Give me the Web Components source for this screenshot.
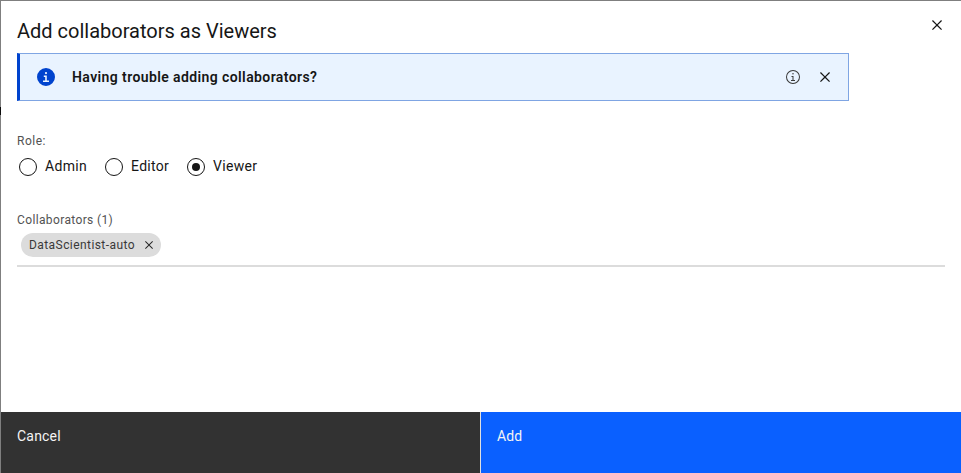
<!DOCTYPE html>
<html lang="en"><head><meta charset="utf-8"><title>Add collaborators</title>
<style>
body{margin:0;background:#fff;overflow:hidden;font-family:Roboto,"Liberation Sans",sans-serif;color:#161616}
</style></head><body>
<collab-modal></collab-modal>
<script>
const define=(name,html)=>customElements.define(name,class extends HTMLElement{
  constructor(){super();this.attachShadow({mode:'open'}).innerHTML=html;}
});

define('close-icon',`<style>:host{display:block;width:20px;height:20px}svg{display:block;width:100%;height:100%}</style>
<svg viewBox="0 0 32 32" fill="currentColor"><path d="M24 9.4 22.6 8 16 14.6 9.4 8 8 9.4 14.6 16 8 22.6 9.4 24 16 17.4 22.6 24 24 22.6 17.4 16z"/></svg>`);

define('info-icon',`<style>:host{display:block;width:16px;height:16px}svg{display:block;width:100%;height:100%}.solid,:host([filled]) .line{display:none}:host([filled]) .solid{display:block}</style>
<svg class="line" viewBox="0 0 32 32" fill="currentColor"><path d="M17 22v-8h-4v2h2v6h-3v2h8v-2zM16 8a1.5 1.5 0 1 0 0 3 1.5 1.5 0 0 0 0-3z"/><path d="M16 30a14 14 0 1 1 14-14 14 14 0 0 1-14 14zm0-26a12 12 0 1 0 12 12A12 12 0 0 0 16 4z"/></svg>
<svg class="solid" viewBox="0 0 20 20" fill="currentColor"><path d="M10 1a9 9 0 1 0 9 9 9 9 0 0 0-9-9zm0 4a1.1 1.1 0 1 1-1.1 1.1A1.1 1.1 0 0 1 10 5zm3 9.9H7v-1.3h2.2V9.9H7.8V8.5h3v5.1H13z"/></svg>`);

define('inline-notice',`<style>
:host{display:flex;align-items:center;box-sizing:border-box;width:832px;height:48px;background:#e9f3ff;border:1px solid #7fa5e3;border-left:3px solid #0043ce;padding:0 13px 0 16px}
info-icon[filled]{width:20px;height:20px;color:#0043ce;margin:0 16px 0 0}
.msg{flex:1;font-size:14px;line-height:18px;font-weight:600;letter-spacing:.4px;white-space:nowrap}
.more{margin-right:14px;color:#393939}
</style><info-icon filled></info-icon><span class="msg"><slot></slot></span><info-icon class="more"></info-icon><close-icon></close-icon>`);

define('radio-option',`<style>
:host{display:flex;align-items:center;font-size:14px;line-height:18px}
i{display:grid;place-items:center;box-sizing:border-box;width:18px;height:18px;border:1px solid #161616;border-radius:50%;margin:0 8px 0 0}
span{padding-bottom:2px}
:host([checked]) i::after{content:"";width:8px;height:8px;border-radius:50%;background:#161616}
</style><i></i><span><slot></slot></span>`);

define('user-tag',`<style>
:host{display:flex;align-items:center;box-sizing:border-box;width:140px;height:24px;border-radius:12px;background:#dcdcdc;color:#393939;padding:0 4px 0 8px;font-size:12px;line-height:16px;justify-content:space-between;white-space:nowrap}
close-icon{width:16px;height:16px;color:#262626}
</style><span><slot></slot></span><close-icon></close-icon>`);

define('action-button',`<style>
:host{display:block;flex:1;box-sizing:border-box;padding:15px 16px;font-size:14px;line-height:18px;color:#f4f4f4;background:#323232}
:host([primary]){background:#0a60ff;border-left:1px solid #e0e0e0}
</style><slot></slot>`);

define('collab-modal',`<style>
:host{display:flex;flex-direction:column;box-sizing:border-box;width:961px;height:473px;border:solid #7f7f7f;border-width:1px 0 0 1px;background:#fff;position:relative}
.edge{position:absolute;left:-1px;top:106px;width:1px;height:8px;background:#0b0b0b}
main{flex:1;padding:16px 16px 0}
header{display:flex;justify-content:space-between;height:36px}
header close-icon{margin:-2px -2px 0 0}
h1{font-size:20px;line-height:28px;font-weight:400;margin:0;white-space:nowrap}
.lbl{font-size:12px;line-height:16px;color:#525252;white-space:nowrap}
.radios{display:flex;padding-left:2px;margin-top:8px;height:20px}
.field{border-bottom:2px solid #dcdcdc;padding:5px 4px 8px}
footer{display:flex;height:61px}
footer action-button:first-child{flex:0 0 479px}
</style>
<span class="edge"></span>
<main><header><h1>Add collaborators as Viewers</h1><close-icon></close-icon></header>
<inline-notice>Having trouble adding collaborators?</inline-notice>
<div class="lbl" style="margin-top:32px"><span style="letter-spacing:.5px">Role:</span></div>
<div class="radios"><radio-option style="width:86px;letter-spacing:.3px">Admin</radio-option><radio-option style="width:82px;letter-spacing:.3px">Editor</radio-option><radio-option checked style="letter-spacing:.3px">Viewer</radio-option></div>
<div class="lbl" style="margin-top:35px"><span style="letter-spacing:.37px">Collaborators (1)</span></div>
<div class="field"><user-tag style="letter-spacing:.43px">DataScientist-auto</user-tag></div></main>
<footer><action-button style="letter-spacing:.2px">Cancel</action-button><action-button primary style="letter-spacing:.16px">Add</action-button></footer>`);
</script></body></html>
